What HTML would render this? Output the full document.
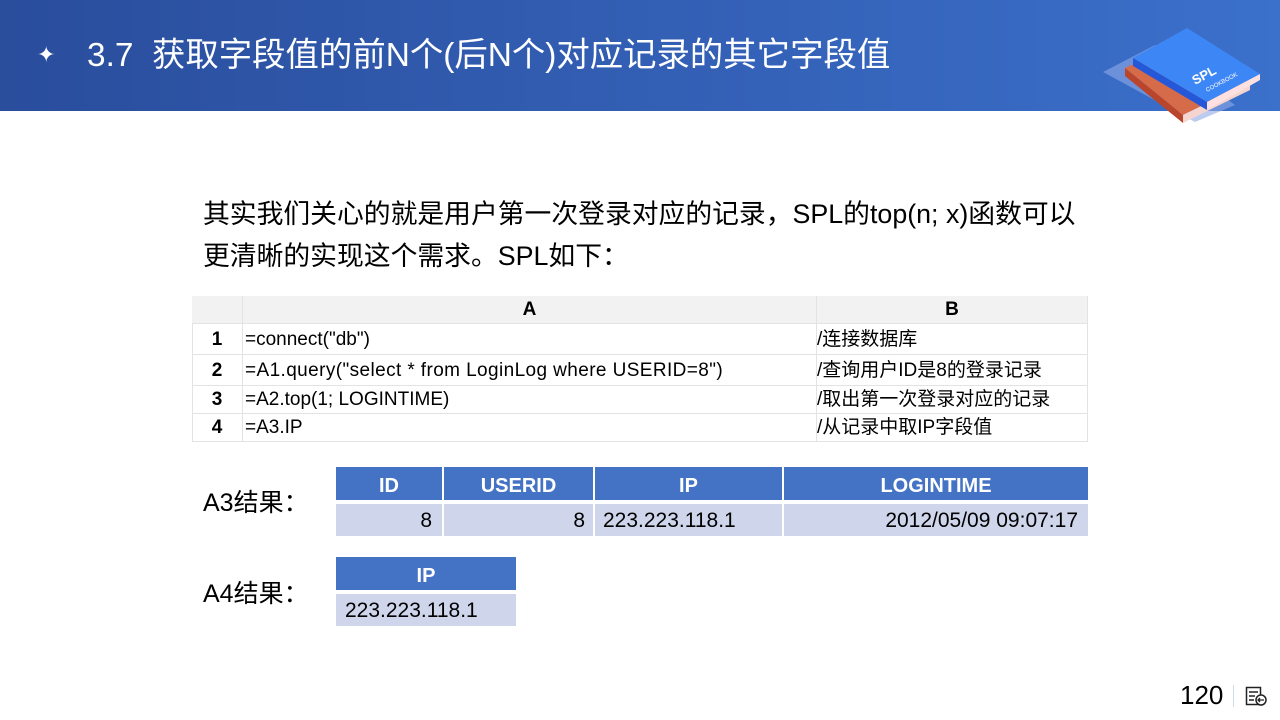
<!DOCTYPE html>
<html><head><meta charset="utf-8"><style>
body{margin:0;width:1280px;height:720px;position:relative;overflow:hidden;background:#fff;font-family:"Liberation Sans","Noto Sans CJK SC",sans-serif;color:#000}
.a{position:absolute}
.hdr{left:0;top:0;width:1280px;height:111px;background:linear-gradient(90deg,#2a4d9c,#3b70cb)}
.c{position:absolute;box-sizing:border-box;font-size:19px;line-height:1;display:flex;align-items:center;white-space:nowrap}
.g{border-right:1px solid #e3e3e3;border-bottom:1px solid #e3e3e3}
.h{background:#4472c4;color:#fff;font-weight:bold;font-size:20px;justify-content:center;padding-top:4px}
.d{background:#cfd5ea;font-size:21px}
</style></head><body>
<div class="a hdr"></div>
<div class="a" style="left:37px;top:42px;color:#fff;font-size:22px">✦</div>
<div class="a" style="left:87px;top:36px;color:#fff;font-size:33.4px;line-height:40px;white-space:nowrap">3.7&nbsp; 获取字段值的前N个(后N个)对应记录的其它字段值</div>
<svg class="a" style="left:1095px;top:10px" width="170" height="115" viewBox="0 0 170 115">
<polygon points="8,62 60,35 140,95 100,112" fill="#8fa9e6" opacity="0.6"/>
<polygon points="30,58 95,28 155,72 88,105" fill="#d66b4a"/>
<polygon points="30,58 30,66 88,113 88,105" fill="#b8452c"/>
<polygon points="88,105 155,72 155,80 88,113" fill="#f4d5d0"/>
<polygon points="38,48 92,18 165,64 112,92" fill="#3d86f5"/>
<polygon points="38,48 38,56 112,100 112,92" fill="#2458d8"/>
<polygon points="112,92 165,64 165,70 112,100" fill="#ffe0e0"/>
<text x="100" y="75" fill="#fff" font-size="13" font-weight="bold" transform="rotate(-28 100 75)" font-family="Liberation Sans">SPL</text>
<text x="112" y="82" fill="#fff" font-size="6" transform="rotate(-28 112 82)" font-family="Liberation Sans">COOKBOOK</text>
</svg>
<div class="a" style="left:203px;top:193px;font-size:26.8px;line-height:42px;white-space:nowrap">其实我们关心的就是用户第一次登录对应的记录，SPL的top(n; x)函数可以<br>更清晰的实现这个需求。SPL如下：</div>

<div class="a" style="left:192px;top:296px;width:896px;height:146px;border-top:1px solid #e3e3e3;border-left:1px solid #e3e3e3;box-sizing:border-box"></div>
<div class="c g" style="left:192px;top:296px;width:51px;height:28px;background:#f2f2f2"></div>
<div class="c g" style="left:243px;top:296px;width:574px;height:28px;background:#f2f2f2;justify-content:center;font-weight:bold">A</div>
<div class="c g" style="left:817px;top:296px;width:271px;height:28px;background:#f2f2f2;justify-content:center;font-weight:bold">B</div>

<div class="c g" style="left:192px;top:324px;width:51px;height:31px;justify-content:center;font-weight:bold">1</div>
<div class="c g" style="left:243px;top:324px;width:574px;height:31px;padding-left:2px">=connect("db")</div>
<div class="c g" style="left:817px;top:324px;width:271px;height:31px">/连接数据库</div>
<div class="c g" style="left:192px;top:355px;width:51px;height:31px;justify-content:center;font-weight:bold">2</div>
<div class="c g" style="left:243px;top:355px;width:574px;height:31px;padding-left:2px;letter-spacing:0.4px">=A1.query("select * from LoginLog where USERID=8")</div>
<div class="c g" style="left:817px;top:355px;width:271px;height:31px">/查询用户ID是8的登录记录</div>
<div class="c g" style="left:192px;top:386px;width:51px;height:28px;justify-content:center;font-weight:bold">3</div>
<div class="c g" style="left:243px;top:386px;width:574px;height:28px;padding-left:2px">=A2.top(1; LOGINTIME)</div>
<div class="c g" style="left:817px;top:386px;width:271px;height:28px">/取出第一次登录对应的记录</div>
<div class="c g" style="left:192px;top:414px;width:51px;height:28px;justify-content:center;font-weight:bold">4</div>
<div class="c g" style="left:243px;top:414px;width:574px;height:28px;padding-left:2px">=A3.IP</div>
<div class="c g" style="left:817px;top:414px;width:271px;height:28px">/从记录中取IP字段值</div>

<div class="a" style="left:203px;top:483px;font-size:25px;white-space:nowrap">A3结果：</div>
<div class="c h" style="left:336px;top:467px;width:106px;height:33px">ID</div>
<div class="c h" style="left:444px;top:467px;width:149px;height:33px">USERID</div>
<div class="c h" style="left:595px;top:467px;width:187px;height:33px">IP</div>
<div class="c h" style="left:784px;top:467px;width:304px;height:33px">LOGINTIME</div>
<div class="c d" style="left:336px;top:504px;width:106px;height:32px;justify-content:flex-end;padding-right:10px">8</div>
<div class="c d" style="left:444px;top:504px;width:149px;height:32px;justify-content:flex-end;padding-right:8px">8</div>
<div class="c d" style="left:595px;top:504px;width:187px;height:32px;padding-left:8px">223.223.118.1</div>
<div class="c d" style="left:784px;top:504px;width:304px;height:32px;justify-content:flex-end;padding-right:10px">2012/05/09 09:07:17</div>

<div class="a" style="left:203px;top:574px;font-size:25px;white-space:nowrap">A4结果：</div>
<div class="c h" style="left:336px;top:557px;width:180px;height:33px">IP</div>
<div class="c d" style="left:336px;top:594px;width:180px;height:32px;padding-left:9px">223.223.118.1</div>

<div class="a" style="left:1180px;top:680px;font-size:26px">120</div>
<div class="a" style="left:1233px;top:685px;width:1px;height:22px;background:#d0d8ea"></div>
<svg class="a" style="left:1245px;top:686px" width="24" height="22" viewBox="0 0 24 22">
<rect x="1.5" y="1.5" width="14" height="17" fill="none" stroke="#222" stroke-width="1.5"/>
<path d="M4 6h9M4 10h6M4 14h5" stroke="#222" stroke-width="1.5"/>
<circle cx="16" cy="14" r="5" fill="#fff" stroke="#222" stroke-width="1.5"/>
<path d="M19 14h-6M15 12l-2 2 2 2" fill="none" stroke="#222" stroke-width="1.3"/>
</svg>
</body></html>
